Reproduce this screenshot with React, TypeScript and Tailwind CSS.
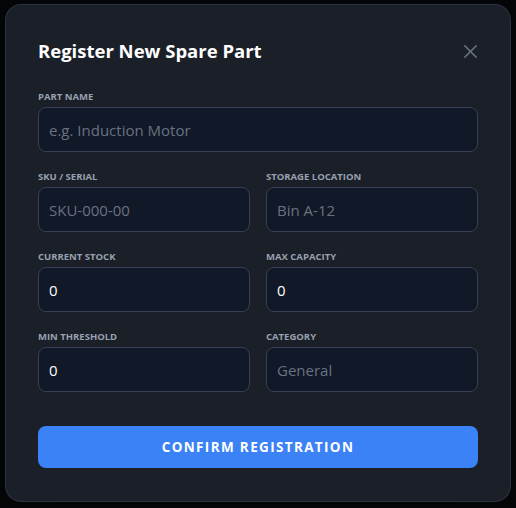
import { X } from "lucide-react"

type FieldProps = {
  label: string
  placeholder?: string
  value?: string
}

function Field({ label, placeholder, value }: FieldProps) {
  return (
    <div className="flex flex-col">
      <label className="mb-[3px] text-[9.5px] font-bold uppercase leading-[15px] text-gray-400">{label}</label>
      <input
        defaultValue={value}
        placeholder={placeholder}
        className="h-[45px] w-full rounded-lg border border-gray-700 bg-[#111827] px-[10px] text-[15px] text-white placeholder:text-gray-500 outline-none"
      />
    </div>
  )
}

export default function App() {
  return (
    <div
      className="flex h-[508px] w-[516px] items-start justify-start bg-[#050608] pl-[5px] pt-[4px]"
      style={{ fontFamily: "'Open Sans', 'Noto Sans', sans-serif" }}
    >
      <div className="w-[506px] rounded-2xl border border-gray-700/60 bg-[#1a1f28] px-8 pb-[33px] pt-8 shadow-2xl">
        {/* Header */}
        <div className="mb-6 flex items-center justify-between">
          <h2 className="text-[18.5px] font-bold leading-7 text-white">Register New Spare Part</h2>
          <button className="-mr-1 text-gray-500">
            <X className="h-[23px] w-[23px]" strokeWidth={1.7} />
          </button>
        </div>

        <div className="flex flex-col gap-[17px]">
          <Field label="Part Name" placeholder="e.g. Induction Motor" />
          <div className="grid grid-cols-2 gap-4">
            <Field label="SKU / Serial" placeholder="SKU-000-00" />
            <Field label="Storage Location" placeholder="Bin A-12" />
          </div>
          <div className="grid grid-cols-2 gap-4">
            <Field label="Current Stock" value="0" />
            <Field label="Max Capacity" value="0" />
          </div>
          <div className="grid grid-cols-2 gap-4">
            <Field label="Min Threshold" value="0" />
            <Field label="Category" placeholder="General" />
          </div>
        </div>

        <button className="mt-[34px] h-[42px] w-full rounded-lg bg-[#3b82f6] text-[13.5px] font-bold uppercase tracking-[0.1em] text-white">
          Confirm Registration
        </button>
      </div>
    </div>
  )
}
